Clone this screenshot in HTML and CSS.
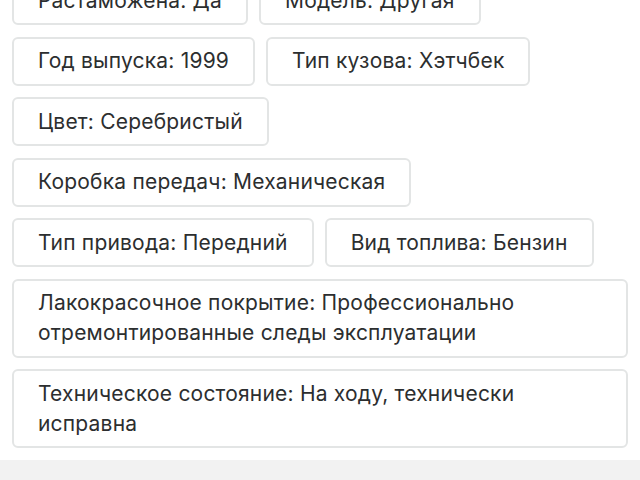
FILE: index.html
```html
<!DOCTYPE html>
<html lang="ru">
<head>
<meta charset="utf-8">
<link rel="stylesheet" href="styles.css">
</head>
<body>
<div class="params">
  <div class="chip">Растаможена: Да</div>
  <div class="chip">Модель: Другая</div>
  <div class="chip">Год выпуска: 1999</div>
  <div class="chip">Тип кузова: Хэтчбек</div>
  <div class="chip">Цвет: Серебристый</div>
  <div class="chip">Коробка передач: Механическая</div>
  <div class="chip">Тип привода: Передний</div>
  <div class="chip">Вид топлива: Бензин</div>
  <div class="chip">Лакокрасочное покрытие: Профессионально отремонтированные следы эксплуатации</div>
  <div class="chip">Техническое состояние: На ходу, технически исправна</div>
</div>
<div class="footer"></div>
</body>
</html>
```
FILE: styles.css
```css
html, body {
  margin: 0;
  padding: 0;
  background: #ffffff;
}
body {
  font-family: "Inter", "Open Sans", "Liberation Sans", sans-serif;
  color: #2c2e2f;
  overflow: hidden;
}
.params {
  display: flex;
  flex-wrap: wrap;
  gap: 11.5px 11px;
  padding: 0 12px;
  margin-top: -24px;
}
.chip {
  border: 2px solid #e3e5e5;
  border-radius: 6px;
  padding: 7.5px 24px;
  font-size: 21px;
  letter-spacing: 0.2px;
  line-height: 30px;
  box-sizing: border-box;
}
.footer {
  margin-top: 11.5px;
  height: 40px;
  background: #f2f2f2;
}
```
